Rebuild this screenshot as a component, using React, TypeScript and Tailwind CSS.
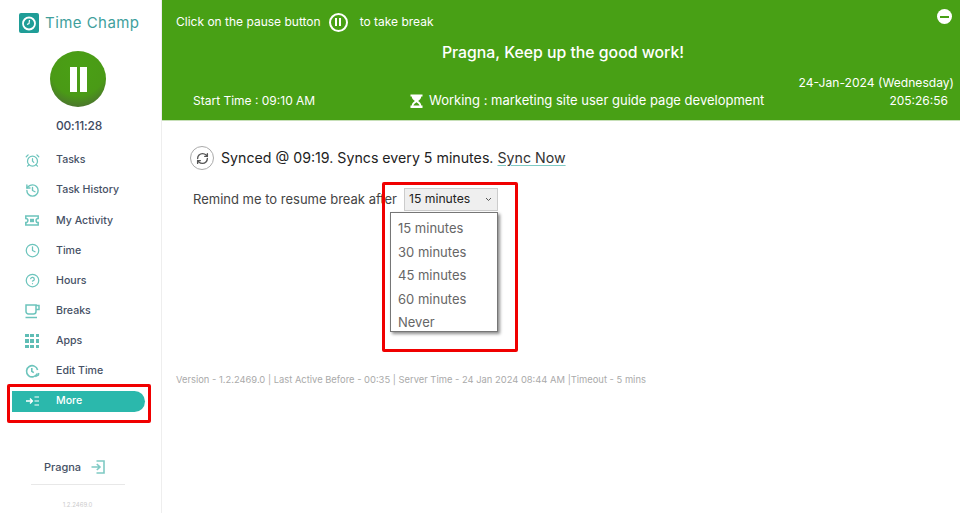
import { AlarmClock, Clock, History, RefreshCw, CircleHelp } from "lucide-react";
import type { ReactNode } from "react";

const font = "font-['Inter','Noto_Sans',sans-serif]";

function AppsIcon() {
  return (
    <div className="grid grid-cols-3 gap-[2px] w-[14px]">
      {Array.from({ length: 9 }).map((_, i) => (
        <div key={i} className="w-[3.5px] h-[3.5px] bg-[#5fbdb5]" />
      ))}
    </div>
  );
}

function TicketIcon() {
  return (
    <svg width="14" height="11" viewBox="0 0 14 11" fill="none">
      <path d="M0.8 1h12.4v2.4a2.1 2.1 0 0 0 0 4.2V10H0.8V7.6a2.1 2.1 0 0 0 0-4.2z" stroke="#6cc4bc" strokeWidth="1.5" />
      <rect x="5" y="3.8" width="4" height="3.4" fill="#6cc4bc" />
    </svg>
  );
}

function CupIcon() {
  return (
    <svg width="15" height="15" viewBox="0 0 15 15" fill="none" stroke="#6cc4bc" strokeWidth="1.5">
      <path d="M1 1h10v6.5a2.5 2.5 0 0 1-2.5 2.5h-5A2.5 2.5 0 0 1 1 7.5z" />
      <path d="M11 1.5h3v4h-3" />
      <path d="M0.5 13.5h11.5" />
    </svg>
  );
}

function EditTimeIcon() {
  return (
    <svg width="15" height="15" viewBox="0 0 15 15" fill="none" stroke="#6cc4bc" strokeWidth="1.6">
      <path d="M12.3 9.5A5.6 5.6 0 1 1 12.6 6" />
      <path d="M6.8 4v3.3l2 1.4" />
      <path d="M10.3 12.6l3-1.6.4-2" />
    </svg>
  );
}

function MoreIcon() {
  return (
    <svg width="14" height="10" viewBox="0 0 14 10" fill="none" stroke="#ffffff" strokeWidth="1.2">
      <path d="M0 5h6M4 2.6L6.4 5 4 7.4" strokeWidth="1.4" />
      <path d="M8.5 1H13M8.5 5H13M8.5 9H13" />
    </svg>
  );
}

function ExitIcon() {
  return (
    <svg width="14" height="14" viewBox="0 0 14 14" fill="none" stroke="#7fcac4" strokeWidth="1.6">
      <path d="M5.5 1H13v12H5.5" />
      <path d="M0.5 7H9M5.8 4L9 7l-3.2 3" />
    </svg>
  );
}

function LogoIcon() {
  return (
    <svg width="20" height="20" viewBox="0 0 20 20" fill="none">
      <rect width="20" height="20" rx="2" fill="#1f9d97" />
      <circle cx="10" cy="10.5" r="6" stroke="#ffffff" strokeWidth="1.8" />
      <path d="M10.5 7l-0.5 3.5-2 1" stroke="#ffffff" strokeWidth="1.2" />
    </svg>
  );
}

function Hourglass() {
  return (
    <svg width="13" height="14" viewBox="0 0 13 14" fill="none">
      <path d="M0.5 0.5h12v2h-1.2c0 2.2-2 3.4-3.2 4.5 1.2 1.1 3.2 2.3 3.2 4.5h1.2v2.5H0.5v-2.5h1.2c0-2.2 2-3.4 3.2-4.5-1.2-1.1-3.2-2.3-3.2-4.5H0.5z" fill="#ffffff" />
      <path d="M3.4 11.6c0.2-1.3 1.9-2.3 3.1-3.3 1.2 1 2.9 2 3.1 3.3z" fill="#48a015" />
    </svg>
  );
}

const iconCls = "text-[#6cc4bc]";

const navItems: { label: string; icon: ReactNode }[] = [
  { label: "Tasks", icon: <AlarmClock size={15} strokeWidth={2} className={iconCls} /> },
  { label: "Task History", icon: <History size={15} strokeWidth={2.2} className={iconCls} /> },
  { label: "My Activity", icon: <TicketIcon /> },
  { label: "Time", icon: <Clock size={15} strokeWidth={2} className={iconCls} /> },
  { label: "Hours", icon: <CircleHelp size={15} strokeWidth={2} className={iconCls} /> },
  { label: "Breaks", icon: <CupIcon /> },
  { label: "Apps", icon: <AppsIcon /> },
  { label: "Edit Time", icon: <EditTimeIcon /> },
];

const options = ["15 minutes", "30 minutes", "45 minutes", "60 minutes", "Never"];

export default function App() {
  return (
    <div className={`${font} relative flex w-[960px] h-[513px] overflow-hidden bg-white`}>
      {/* Sidebar */}
      <aside className="w-[162px] shrink-0 h-full border-r border-[#eeeeee] flex flex-col items-stretch">
        <div className="flex items-center gap-[6px] pl-[19px] pt-[12px] h-[34px]">
          <LogoIcon />
          <span className="text-[15px] tracking-[0.45px] text-[#3f9f9c]">Time Champ</span>
        </div>

        <div className="mt-[17px] ml-[50px] w-[56px] h-[56px] rounded-full flex items-center justify-center gap-[3px] bg-[radial-gradient(circle_at_50%_30%,#4aa015_0%,#4a9a16_58%,#4d5a40_100%)]">
          <div className="w-[7px] h-[25px] bg-white" />
          <div className="w-[7px] h-[25px] bg-white" />
        </div>
        <div className="mt-[9px] pr-[3px] text-center text-[12px] tracking-[-0.2px] font-medium text-[#3f4a5f] leading-[20px]">00:11:28</div>

        <nav className="mt-[9px] flex flex-col">
          {navItems.map((item) => (
            <div key={item.label} className="h-[30.2px] flex items-center pl-[25px]">
              <div className="w-[31px] flex items-center">{item.icon}</div>
              <span className="text-[10.6px] font-medium text-[#465165]">{item.label}</span>
            </div>
          ))}
          <div className="h-[21px] mt-[4px] w-[133px] ml-[12px] rounded-r-full bg-[#2bb8ac] flex items-center pl-[14px]">
            <div className="w-[30px] flex items-center"><MoreIcon /></div>
            <span className="text-[10.6px] font-medium text-white">More</span>
          </div>
        </nav>

        <div className="mt-[47px] flex items-center justify-center gap-[10px] pr-[12px]">
          <span className="text-[11px] font-medium text-[#465165]">Pragna</span>
          <ExitIcon />
        </div>
        <div className="mt-[9px] ml-[31px] mr-[36px] border-t border-[#e8e8e8]" />
        <div className="mt-[15px] pr-[6px] text-center text-[6px] text-[#cccccc]">1.2.2469.0</div>
      </aside>

      <main className="flex-1 min-w-0 flex flex-col">
        {/* Banner */}
        <header className="relative h-[121px] bg-[#48a015] text-white border-b border-[#c7e0b8] px-[14px]">
          <div className="h-[44px] flex items-center text-[12px]">
            <span>Click on the pause button</span>
            <div className="mx-[8px] w-[19px] h-[19px] rounded-full border-2 border-white flex items-center justify-center gap-[2px]">
              <div className="w-[2px] h-[8px] bg-white" />
              <div className="w-[2px] h-[8px] bg-white" />
            </div>
            <span className="ml-[4px]">to take break</span>
          </div>
          <div className="mt-[-1px] h-[20px] pl-[4px] flex items-center justify-center text-[15.8px] font-medium">
            Pragna, Keep up the good work!
          </div>
          <div className="absolute left-[31px] right-[6px] bottom-[10px] flex items-end text-[12px]">
            <span className="w-[217px] leading-[18px]">Start Time : 09:10 AM</span>
            <div className="flex items-center gap-[6px] h-[18px]">
              <Hourglass />
              <span className="text-[13px]">Working : marketing site user guide page development</span>
            </div>
            <div className="ml-auto flex flex-col items-end">
              <span className="leading-[18px] text-[12.1px]">24-Jan-2024 (Wednesday)</span>
              <span className="pr-[6px] leading-[18px]">205:26:56</span>
            </div>
          </div>
          {/* minimise */}
          <div className="absolute top-[9px] right-[8px] w-[15px] h-[15px] rounded-full bg-white flex items-center justify-center">
            <div className="w-[9px] h-[2px] bg-[#48a015]" />
          </div>
        </header>

        {/* Content */}
        <div className="flex-1 relative pl-[28px] pt-[25px]">
          <div className="flex items-center gap-[7px] h-[24px]">
            <div className="w-[24px] h-[24px] rounded-full border border-[#aaaaaa] flex items-center justify-center">
              <RefreshCw size={13} strokeWidth={2.5} className="text-[#555555]" />
            </div>
            <span className="text-[14.2px] text-[#222222]">
              Synced @ 09:19. Syncs every 5 minutes.{" "}
              <span className="text-[#333333] underline decoration-[#7fcac4] underline-offset-2">Sync Now</span>
            </span>
          </div>

          <div className="mt-[18px] ml-[3px] flex items-center h-[23px]">
            <span className="w-[211px] text-[13px] text-[#444444] whitespace-nowrap">Remind me to resume break after</span>
            <div className="w-[94px] h-[23px] border border-[#cccccc] bg-[#efefef] flex items-center justify-between pl-[4px] pr-[5px] text-[12.2px] text-[#222222]">
              <span>15 minutes</span>
              <svg width="7" height="5" viewBox="0 0 7 5" fill="none" stroke="#555555" strokeWidth="1">
                <path d="M1 1l2.5 2.5L6 1" />
              </svg>
            </div>
          </div>

          {/* Options list */}
          <ul className="absolute left-[228px] top-[91px] w-[108px] h-[120px] bg-white border border-[#767676] shadow-[2px_2px_3px_rgba(0,0,0,0.45)] overflow-hidden pl-[7px] pt-[4px]">
            {options.map((o) => (
              <li key={o} className="h-[23.6px] flex items-center text-[13px] text-[#666666]">{o}</li>
            ))}
          </ul>

          <p className="absolute left-[14px] top-[252px] text-[9.4px] text-[#aaaaaa]">
            Version - 1.2.2469.0 | Last Active Before - 00:35 | Server Time - 24 Jan 2024 08:44 AM |Timeout - 5 mins
          </p>
        </div>
      </main>

      {/* Annotations */}
      <div className="absolute left-[382px] top-[182px] w-[136px] h-[170px] border-[3px] border-[#f00000] rounded-[2px]" />
      <div className="absolute left-[7px] top-[384px] w-[144px] h-[39px] border-[3px] border-[#f00000] rounded-[2px]" />
    </div>
  );
}
